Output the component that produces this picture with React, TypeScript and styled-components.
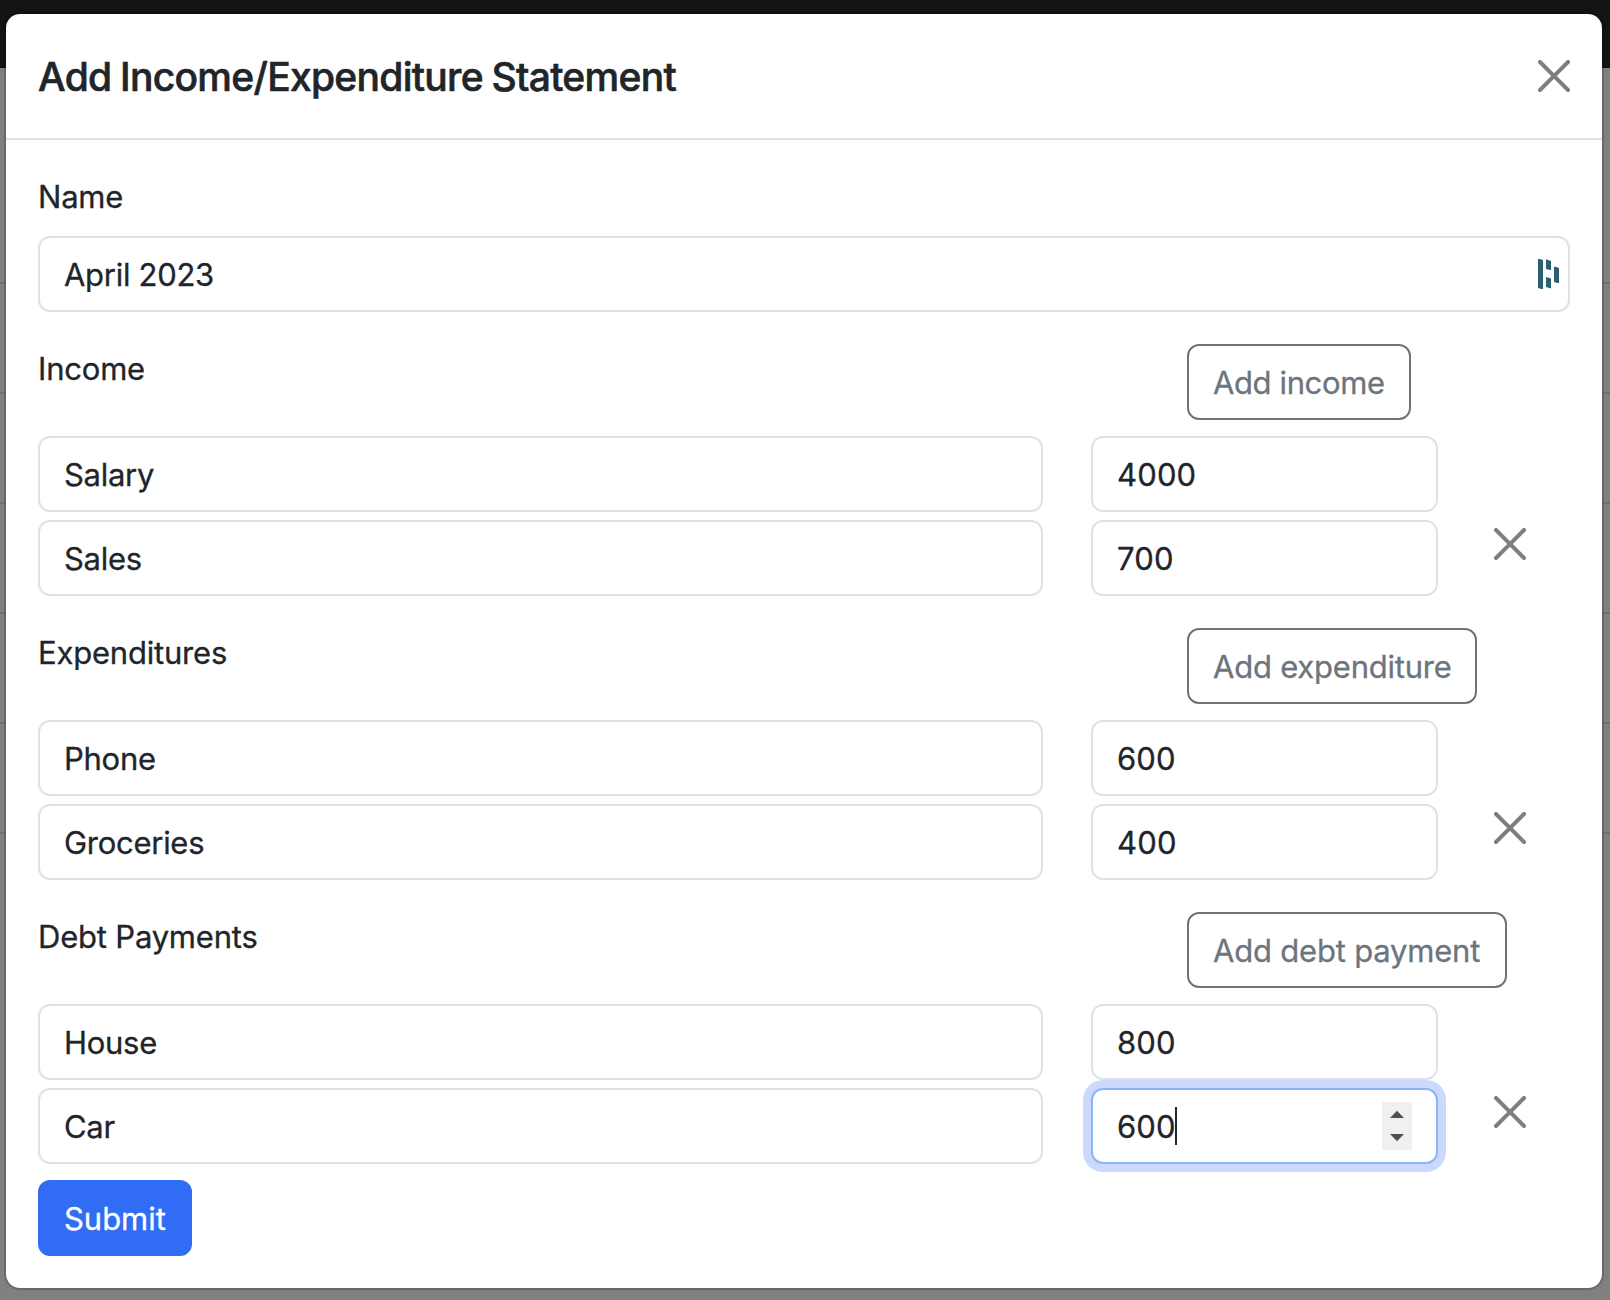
import React from "react";
import styled, { createGlobalStyle, css } from "styled-components";

const GlobalStyle = createGlobalStyle`
  *, *::before, *::after { box-sizing: border-box; }
  body {
    margin: 0;
    background: #808080;
    color: #212529;
    font-family: Inter, "Liberation Sans", sans-serif;
    font-size: 31px;
    line-height: 49px;
    letter-spacing: -0.2px;
    -webkit-text-stroke: 0.3px currentColor;
  }
`;

const Screen = styled.div`
  position: relative;
  width: 1610px;
  height: 1300px;
  overflow: hidden;
  background: #808080;
`;

const NavBar = styled.div`
  height: 68px;
  background: #111315;
`;

const TableRow = styled.div<{ $height: number }>`
  height: ${(p) => p.$height}px;
  border-bottom: 2px solid #6f7173;
`;

const Modal = styled.section`
  position: absolute;
  top: 12px;
  left: 4px;
  width: 1600px;
  height: 1278px;
  display: flex;
  flex-direction: column;
  background: #fff;
  background-clip: padding-box;
  border: 2px solid rgba(0, 0, 0, 0.175);
  border-radius: 16px;
`;

const Header = styled.header`
  display: flex;
  align-items: center;
  justify-content: space-between;
  height: 126px;
  padding: 0 24px 0 32px;
  border-bottom: 2px solid #dee2e6;
`;

const Title = styled.h5`
  height: 60px;
  margin: 0;
  font-size: 39px;
  font-weight: 500;
  line-height: 61px;
  letter-spacing: -0.72px;
  word-spacing: -1px;
  -webkit-text-stroke-width: 0.6px;
  white-space: nowrap;
`;

const CloseButton = styled.button`
  display: block;
  width: 48px;
  height: 48px;
  padding: 8px;
  border: 0;
  background: transparent;
  color: #000;
  opacity: 0.5;

  svg {
    display: block;
    width: 32px;
    height: 32px;
  }
`;

const Body = styled.form`
  display: flex;
  flex-direction: column;
  align-items: stretch;
  padding: 32px;
`;

const Label = styled.div`
  height: 48px;
  white-space: nowrap;
`;

const NameGroup = styled.div`
  display: flex;
  flex-direction: column;
  gap: 16px;
  margin-bottom: 32px;
`;

const Field = styled.div<{ $focused?: boolean; $numeric?: boolean; $logo?: boolean }>`
  display: flex;
  align-items: center;
  justify-content: space-between;
  min-width: 0;
  height: 76px;
  padding: 0 ${(p) => (p.$logo ? 9 : 24)}px 0 24px;
  background: #fff;
  border: 2px solid #dee2e6;
  border-radius: 12px;
  letter-spacing: ${(p) => (p.$numeric ? 0.15 : -0.28)}px;
  white-space: nowrap;
  ${(p) =>
    p.$focused &&
    css`
      border-color: #8cb4f8;
      box-shadow: 0 0 0 8px #cbdafc;
    `}
`;

const Value = styled.span`
  display: flex;
  align-items: center;
  height: 50px;
  line-height: 49px;
`;

const Caret = styled.span`
  width: 2px;
  height: 38px;
  margin-left: -0.5px;
  background: #212529;
`;

const Spinner = styled.span`
  display: flex;
  width: 30px;
  height: 48px;
  background: #f0f0f0;

  svg {
    display: block;
    width: 30px;
    height: 48px;
  }
`;

const Group = styled.div`
  display: flex;
  flex-direction: column;
  margin-bottom: 32px;

  &:last-of-type {
    margin-bottom: 16px;
  }
`;

const GroupHead = styled.div`
  display: grid;
  grid-template-columns: 1149px 1fr;
  align-items: start;
  height: 92px;
`;

const Row = styled.div`
  display: grid;
  grid-template-columns: 1005px 347px 48px;
  column-gap: 48px;
  height: 76px;

  & + & {
    margin-top: 8px;
  }
`;

const Button = styled.button<{ $primary?: boolean; $width: number; $spacing: number }>`
  display: flex;
  align-items: center;
  justify-content: flex-start;
  justify-self: start;
  width: ${(p) => p.$width}px;
  height: 76px;
  padding: 0 24px;
  border: 2px solid ${(p) => (p.$primary ? "#316cf4" : "#6c757d")};
  border-radius: 12px;
  background: ${(p) => (p.$primary ? "#316cf4" : "transparent")};
  color: ${(p) => (p.$primary ? "#fff" : "#6c757d")};
  font: inherit;
  letter-spacing: ${(p) => p.$spacing}px;
  white-space: nowrap;
`;

const CloseIcon = () => (
  <svg viewBox="0 0 16 16" fill="currentColor" aria-hidden="true">
    <path d="M.293.293a1 1 0 0 1 1.414 0L8 6.586 14.293.293a1 1 0 1 1 1.414 1.414L9.414 8l6.293 6.293a1 1 0 0 1-1.414 1.414L8 9.414l-6.293 6.293a1 1 0 0 1-1.414-1.414L6.586 8 .293 1.707a1 1 0 0 1 0-1.414z" />
  </svg>
);

const PasswordManagerIcon = () => (
  <svg width="21" height="30" viewBox="0 0 21 30" fill="#2b6073" aria-hidden="true">
    <path d="M0 0h1.5L5 1v29H3.500L0 29z" />
    <path d="M8 .6h1L13 2v9H12L8 10z" />
    <path d="M8 18.300h1L13 19.500V29.200H12L8 28z" />
    <path d="M16 7.800h1.500L21 9v15h-1.500L16 23z" />
  </svg>
);

interface Entry {
  name: string;
  amount: string;
  focused?: boolean;
}

interface EntryGroup {
  label: string;
  action: string;
  width: number;
  spacing: number;
  entries: Entry[];
}

const groups: EntryGroup[] = [
  {
    label: "Income",
    action: "Add income",
    width: 224,
    spacing: -0.38,
    entries: [
      { name: "Salary", amount: "4000" },
      { name: "Sales", amount: "700" },
    ],
  },
  {
    label: "Expenditures",
    action: "Add expenditure",
    width: 290,
    spacing: -0.22,
    entries: [
      { name: "Phone", amount: "600" },
      { name: "Groceries", amount: "400" },
    ],
  },
  {
    label: "Debt Payments",
    action: "Add debt payment",
    width: 320,
    spacing: -0.2,
    entries: [
      { name: "House", amount: "800" },
      { name: "Car", amount: "600", focused: true },
    ],
  },
];

const backgroundRows = [216, 110, 110, 110, 110, 110];

export default function App() {
  return (
    <>
      <GlobalStyle />
      <Screen>
        <NavBar />
        {backgroundRows.map((height, i) => (
          <TableRow key={i} $height={height} />
        ))}
        <Modal>
          <Header>
            <Title>Add Income/Expenditure Statement</Title>
            <CloseButton type="button" aria-label="Close">
              <CloseIcon />
            </CloseButton>
          </Header>
          <Body>
            <NameGroup>
              <Label>Name</Label>
              <Field $logo>
                <Value>April 2023</Value>
                <PasswordManagerIcon />
              </Field>
            </NameGroup>
            {groups.map((group) => (
              <Group key={group.label}>
                <GroupHead>
                  <Label>{group.label}</Label>
                  <Button type="button" $width={group.width} $spacing={group.spacing}>
                    {group.action}
                  </Button>
                </GroupHead>
                {group.entries.map((entry, i) => (
                  <Row key={entry.name}>
                    <Field>
                      <Value>{entry.name}</Value>
                    </Field>
                    <Field $numeric $focused={entry.focused}>
                      <Value>
                        {entry.amount}
                        {entry.focused && <Caret />}
                      </Value>
                      {entry.focused && (
                        <Spinner>
                          <svg viewBox="0 0 30 48" fill="#505050" aria-hidden="true">
                            <path d="M8 16 15 8.800 22 16z" />
                            <path d="M8 32h14l-7 7.200z" />
                          </svg>
                        </Spinner>
                      )}
                    </Field>
                    {i > 0 && (
                      <CloseButton type="button" aria-label="Remove">
                        <CloseIcon />
                      </CloseButton>
                    )}
                  </Row>
                ))}
              </Group>
            ))}
            <Button type="button" $primary $width={154} $spacing={-0.03}>
              Submit
            </Button>
          </Body>
        </Modal>
      </Screen>
    </>
  );
}
